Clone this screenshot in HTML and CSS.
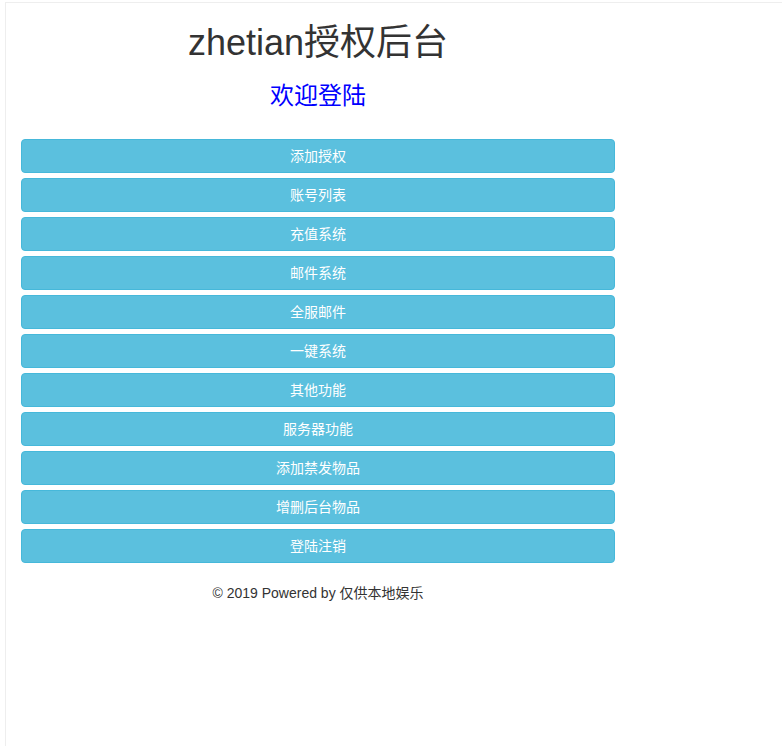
FILE: index.html
```html
<!DOCTYPE html>
<html lang="zh-CN">
<head>
<meta charset="utf-8">
<title>zhetian授权后台</title>
<link rel="stylesheet" href="styles.css">
</head>
<body>
<div class="frame">
  <div class="main">
    <h1 class="title">zhetian授权后台</h1>
    <h3 class="welcome">欢迎登陆</h3>
    <div class="menu">
      <a class="btn">添加授权</a>
      <a class="btn">账号列表</a>
      <a class="btn">充值系统</a>
      <a class="btn">邮件系统</a>
      <a class="btn">全服邮件</a>
      <a class="btn">一键系统</a>
      <a class="btn">其他功能</a>
      <a class="btn">服务器功能</a>
      <a class="btn">添加禁发物品</a>
      <a class="btn">增删后台物品</a>
      <a class="btn">登陆注销</a>
    </div>
    <p class="footer">© 2019 Powered by 仅供本地娱乐</p>
  </div>
</div>
</body>
</html>
```
FILE: styles.css
```css
html, body {
  margin: 0;
  padding: 0;
  background: #fff;
}
body {
  font-family: "Liberation Sans", "Noto Sans CJK SC", sans-serif;
  font-size: 14px;
  line-height: 1.42857;
  color: #333;
}
.frame {
  margin: 2px 0 0 5px;
  border-top: 1px solid #eee;
  border-left: 1px solid #eee;
  min-height: calc(100vh - 2px);
  box-sizing: border-box;
}
.main {
  width: 594px;
  padding: 0 15px;
  text-align: center;
}
.title {
  font-size: 36px;
  font-weight: 400;
  line-height: 1.1;
  margin: 20px 0 10px;
  color: #333;
}
.welcome {
  font-size: 24px;
  font-weight: 400;
  line-height: 1.1;
  margin: 20px 0 10px;
  color: #0000ff;
}
.menu {
  display: flex;
  flex-direction: column;
  gap: 5px;
  margin-top: 30px;
}
.btn {
  display: block;
  padding: 6px 12px;
  font-size: 14px;
  line-height: 20px;
  color: #fff;
  background: #5bc0de;
  border: 1px solid #46b8da;
  border-radius: 4px;
  text-align: center;
  cursor: pointer;
}
.footer {
  margin: 21px 0 0;
}
```
